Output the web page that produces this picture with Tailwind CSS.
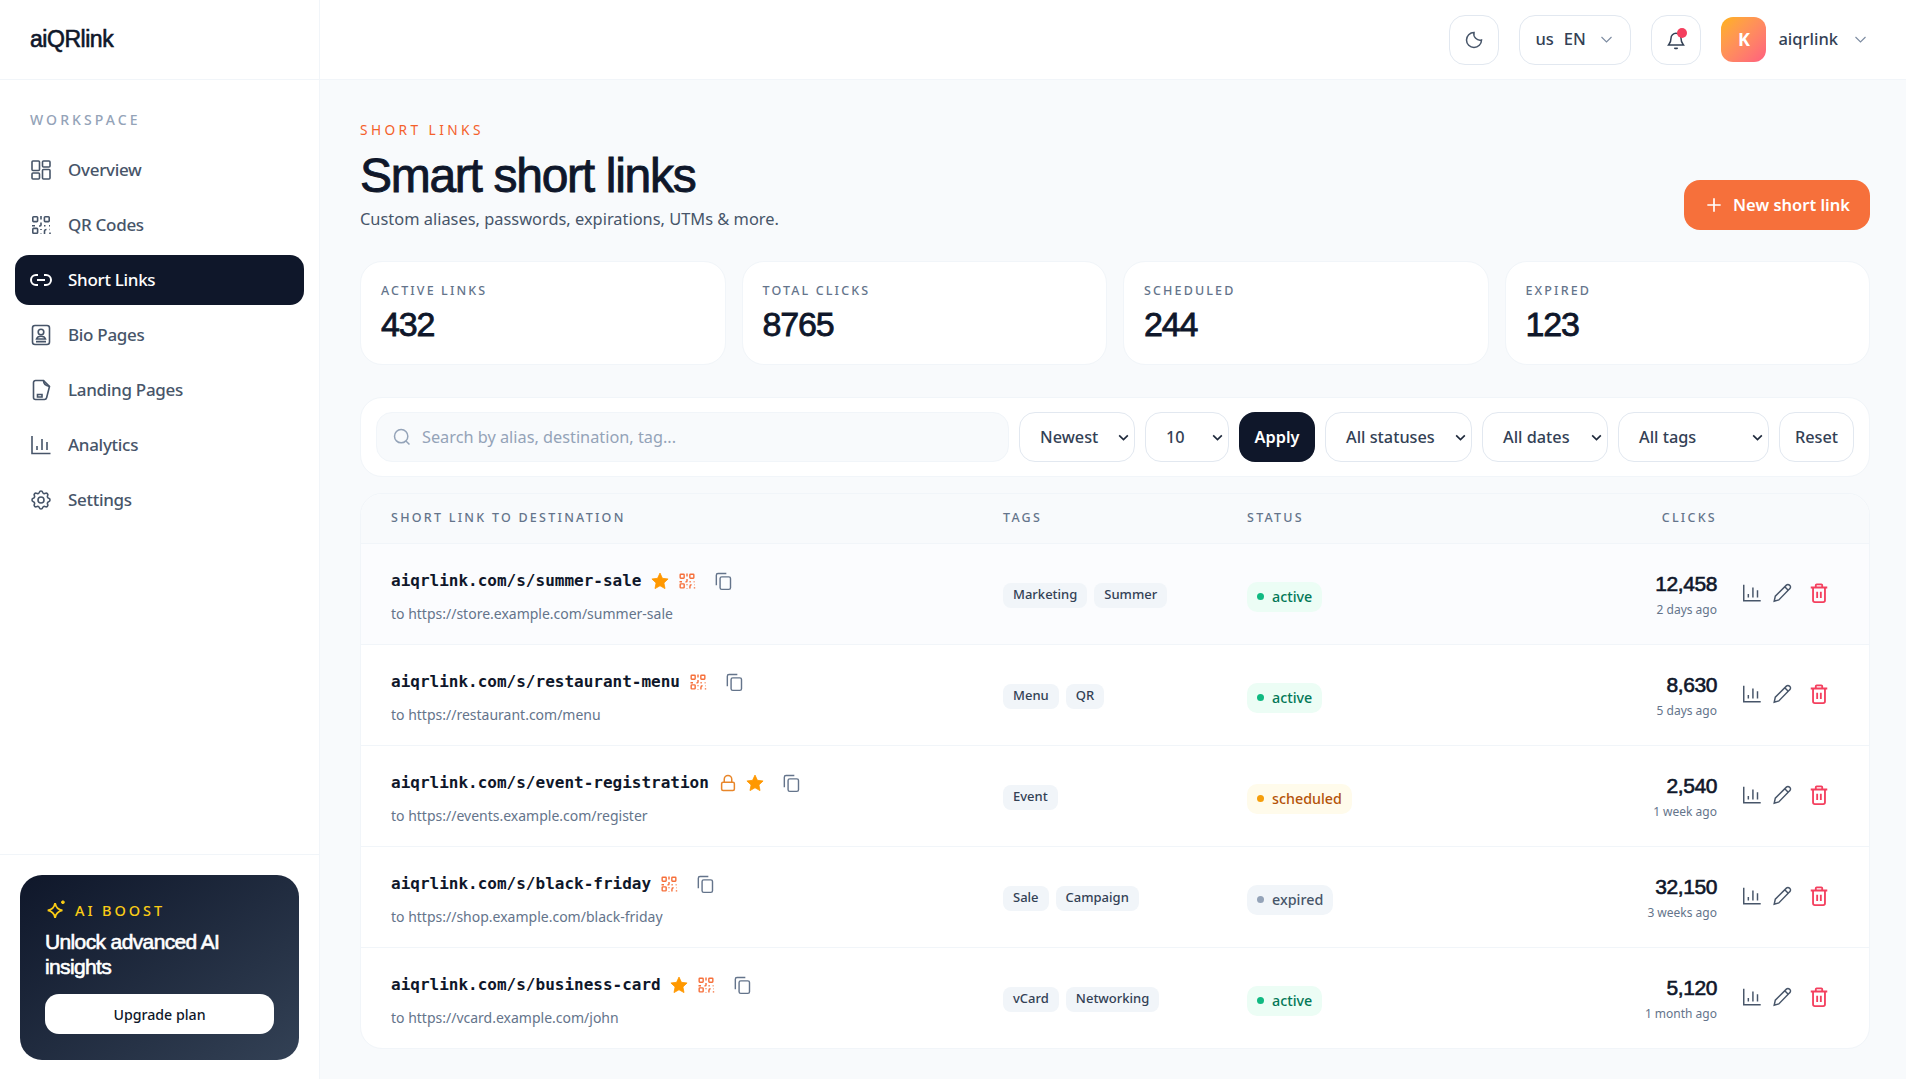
<!DOCTYPE html>
<html lang="en">
<head>
  <meta charset="UTF-8" />
  <title>aiQRlink - Short Links</title>
  <script src="https://cdn.jsdelivr.net/npm/@tailwindcss/browser@4"></script>
</head>
<body class="font-['Noto_Sans',sans-serif] bg-[#f8fafc] text-[#0f172a] h-[1079px] overflow-hidden">

  <!-- icon sprites -->
  <svg class="hidden">
    <symbol id="i-dash" viewBox="0 0 24 24"><rect x="3" y="3" width="7.500" height="9.500" rx="1"/><rect x="13.500" y="3" width="7.500" height="6" rx="1"/><rect x="13.500" y="11.500" width="7.500" height="9.500" rx="1"/><rect x="3" y="15" width="7.500" height="6" rx="1"/></symbol>
    <symbol id="i-qr" viewBox="0 0 24 24"><rect x="3.800" y="3.800" width="4.800" height="4.800" rx=".8"/><rect x="15.400" y="3.800" width="4.800" height="4.800" rx=".8"/><rect x="3.800" y="15.400" width="4.800" height="4.800" rx=".8"/><path d="M12 3v3.500M12 9.500v2.500c0 .5-.5 1-1 1h-1M3 12.800h3M15 12.800h1.500M20 12.800h1M12 16v1M12 20.500v.5M15.500 21v-2.500a2 2 0 0 1 2-2M21 21v-1.500M20.500 16.500h.5"/></symbol>
    <symbol id="i-link" viewBox="0 0 24 24"><path d="M9 17H7A5 5 0 0 1 7 7h2M15 7h2a5 5 0 1 1 0 10h-2M8 12h8"/></symbol>
    <symbol id="i-bio" viewBox="0 0 24 24"><rect x="3.500" y="2.500" width="17" height="19" rx="2.500"/><circle cx="12" cy="9" r="2.800"/><path d="M7.500 16c.6-2 2.400-2.800 4.500-2.800s3.900.8 4.500 2.800zM7 18.600h10"/></symbol>
    <symbol id="i-page" viewBox="0 0 24 24"><path d="M14.500 2.500H6.500a2 2 0 0 0-2 2v15a2 2 0 0 0 2 2h9a2.200 2.200 0 0 0 2.100-1.700L20.500 8.500z"/><path d="M14.500 2.500c0 3 1.200 5 6 6"/><path d="M11 11.500v.01M8.500 16.500h4.500v2.500H8.500z"/></symbol>
    <symbol id="i-chart" viewBox="0 0 24 24"><path d="M3 3v17.500h18.500M8 17v-4M13 17V6M18 17V9"/></symbol>
    <symbol id="i-gear" viewBox="0 0 24 24"><path d="M10.325 4.317c.426 -1.756 2.924 -1.756 3.35 0a1.724 1.724 0 0 0 2.573 1.066c1.543 -.94 3.31 .826 2.37 2.37a1.724 1.724 0 0 0 1.065 2.572c1.756 .426 1.756 2.924 0 3.35a1.724 1.724 0 0 0 -1.066 2.573c.94 1.543 -.826 3.31 -2.37 2.37a1.724 1.724 0 0 0 -2.572 1.065c-.426 1.756 -2.924 1.756 -3.35 0a1.724 1.724 0 0 0 -2.573 -1.066c-1.543 .94 -3.31 -.826 -2.37 -2.37a1.724 1.724 0 0 0 -1.065 -2.572c-1.756 -.426 -1.756 -2.924 0 -3.35a1.724 1.724 0 0 0 1.066 -2.573c-.94 -1.543 .826 -3.31 2.37 -2.37c1 .608 2.296 .07 2.572 -1.065z"/><circle cx="12" cy="12" r="3"/></symbol>
    <symbol id="i-spark" viewBox="0 0 24 24"><path d="M11 4.500c.9 5 3 7.100 8 8-5 .9-7.100 3-8 8-.9-5-3-7.100-8-8 5-.9 7.100-3 8-8z"/><path d="M19.500 1.500v4M17.500 3.500h4M3.500 20.500v.01"/></symbol>
    <symbol id="i-moon" viewBox="0 0 24 24"><path d="M12 3a7.500 7.500 0 0 0 9 9 9 9 0 1 1-9-9z"/></symbol>
    <symbol id="i-chev" viewBox="0 0 24 24"><path d="M4 8l8 8 8-8"/></symbol>
    <symbol id="i-bell" viewBox="0 0 24 24"><path d="M12 4a6 6 0 0 0-6 6c0 5-2 6.500-3 8h18c-1-1.500-3-3-3-8a6 6 0 0 0-6-6zM10 21.500c1 .8 3 .8 4 0"/></symbol>
    <symbol id="i-plus" viewBox="0 0 24 24"><path d="M12 4v16M4 12h16"/></symbol>
    <symbol id="i-search" viewBox="0 0 24 24"><circle cx="11" cy="11" r="8"/><path d="M21 21l-4.300-4.300"/></symbol>
    <symbol id="i-copy" viewBox="0 0 24 24"><rect x="8.500" y="7" width="12.500" height="15" rx="2"/><path d="M16 3H6a2 2 0 0 0-2 2v12"/></symbol>
    <symbol id="i-lock" viewBox="0 0 24 24"><rect x="3.500" y="11" width="17" height="11" rx="2"/><path d="M7 11V7a5 5 0 0 1 10 0v4"/></symbol>
    <symbol id="i-star" viewBox="0 0 24 24"><path stroke-width="1" d="M12 2.500l2.900 6.300 6.800.8-5 4.700 1.300 6.800-6-3.400-6 3.400 1.300-6.800-5-4.700 6.800-.8z"/></symbol>
    <symbol id="i-pencil" viewBox="0 0 24 24"><path d="M3.500 21l1.200-5.500L16.800 3.400a2.300 2.300 0 0 1 3.300 0l.5.5a2.300 2.300 0 0 1 0 3.300L8.500 19.600z M15 5.200l3.800 3.800"/></symbol>
    <symbol id="i-trash" viewBox="0 0 24 24"><path d="M3 6h18M8.500 6V3.500a1 1 0 0 1 1-1h5a1 1 0 0 1 1 1V6M5.500 6v14a2 2 0 0 0 2 2h9a2 2 0 0 0 2-2V6M10 10.500v7M14 10.500v7"/></symbol>
  </svg>

  <div class="flex h-full">

    <!-- Sidebar -->
    <aside class="w-[320px] shrink-0 bg-white border-r border-[#f1f5f9] flex flex-col h-full">
      <div class="h-[80px] px-[30px] flex items-center border-b border-[#f1f5f9] font-['Liberation_Sans',sans-serif] text-[23px] tracking-[-0.02em] [-webkit-text-stroke:0.6px] text-[#0f172a]">aiQRlink</div>
      <nav class="flex-1 px-[15px] pt-[31px]">
        <p class="pl-[15px] text-[14px] leading-[18px] tracking-[0.22em] font-medium text-[#94a3b8] mb-[16px]">WORKSPACE</p>
        <div class="flex flex-col gap-[5px] text-[17px] tracking-[-0.3px] font-medium text-[#475569]">
          <a class="h-[50px] flex items-center gap-[15px] pl-[14px] rounded-[14px]"><svg class="w-[24px] h-[24px] fill-none stroke-current stroke-[1.6]"><use href="#i-dash"/></svg>Overview</a>
          <a class="h-[50px] flex items-center gap-[15px] pl-[14px] rounded-[14px]"><svg class="w-[24px] h-[24px] fill-none stroke-current stroke-[1.6]"><use href="#i-qr"/></svg>QR Codes</a>
          <a class="h-[50px] flex items-center gap-[15px] pl-[14px] rounded-[14px] bg-[#0f172a] text-white"><svg class="w-[24px] h-[24px] fill-none stroke-current stroke-2"><use href="#i-link"/></svg>Short Links</a>
          <a class="h-[50px] flex items-center gap-[15px] pl-[14px] rounded-[14px]"><svg class="w-[24px] h-[24px] fill-none stroke-current stroke-[1.6]"><use href="#i-bio"/></svg>Bio Pages</a>
          <a class="h-[50px] flex items-center gap-[15px] pl-[14px] rounded-[14px]"><svg class="w-[24px] h-[24px] fill-none stroke-current stroke-[1.6]"><use href="#i-page"/></svg>Landing Pages</a>
          <a class="h-[50px] flex items-center gap-[15px] pl-[14px] rounded-[14px]"><svg class="w-[24px] h-[24px] fill-none stroke-current stroke-[1.6]"><use href="#i-chart"/></svg>Analytics</a>
          <a class="h-[50px] flex items-center gap-[15px] pl-[14px] rounded-[14px]"><svg class="w-[24px] h-[24px] fill-none stroke-current stroke-[1.6]"><use href="#i-gear"/></svg>Settings</a>
        </div>
      </nav>
      <div class="border-t border-[#f1f5f9] px-[20px] pt-[20px] pb-[19px]">
        <div class="h-[185px] rounded-[22px] bg-linear-to-br from-[#0f172a] to-[#334155] px-[25px] pt-[23px]">
          <div class="flex items-center gap-[8px] text-[#facc15] text-[14.500px] font-medium tracking-[0.2em] leading-[24px]">
            <svg class="w-[22px] h-[22px] fill-none stroke-current stroke-2"><use href="#i-spark"/></svg>AI BOOST
          </div>
          <p class="font-['Liberation_Sans',sans-serif] text-white text-[21px] tracking-[-0.03em] [-webkit-text-stroke:0.6px] leading-[25px] mt-[7px]">Unlock advanced AI insights</p>
          <button class="mt-[15px] w-full h-[40px] pt-[2px] bg-white rounded-[14px] text-[14.200px] font-medium text-[#0f172a]">Upgrade plan</button>
        </div>
      </div>
    </aside>

    <div class="flex-1 min-w-0 flex flex-col">
      <!-- Topbar -->
      <header class="h-[80px] shrink-0 bg-white border-b border-[#f1f5f9] flex items-center justify-end pr-[38px] text-[#334155]">
        <button class="w-[50px] h-[50px] rounded-[16px] border border-[#e2e8f0] bg-white flex items-center justify-center"><svg class="w-[20px] h-[20px] fill-none stroke-[#475569] stroke-[1.8]"><use href="#i-moon"/></svg></button>
        <button class="ml-[20px] w-[112px] h-[50px] rounded-[16px] border border-[#e2e8f0] flex items-center pl-[15px] text-[16.500px] font-medium">us<span class="ml-[10px]">EN</span><svg class="ml-[13px] w-[15px] h-[15px] fill-none stroke-[#7c8ba1] stroke-[1.800]"><use href="#i-chev"/></svg></button>
        <button class="relative ml-[20px] w-[50px] h-[50px] rounded-[16px] border border-[#e2e8f0] flex items-center justify-center"><svg class="w-[20px] h-[20px] fill-none stroke-[#334155] stroke-[1.8]"><use href="#i-bell"/></svg><span class="absolute top-[12px] right-[13px] w-[10px] h-[10px] rounded-full bg-[#f43f5e]"></span></button>
        <div class="ml-[20px] w-[45px] h-[45px] rounded-[12px] bg-linear-to-br from-[#ffb300] to-[#ff5e7e] flex items-center justify-center text-white font-bold text-[18px]">K</div>
        <span class="ml-[12px] text-[16.500px] font-medium">aiqrlink</span>
        <svg class="ml-[15px] w-[15px] h-[15px] fill-none stroke-[#7c8ba1] stroke-[1.800]"><use href="#i-chev"/></svg>
      </header>

      <main class="pl-[40px] pr-[36px] pt-[40px]">
        <!-- Page head -->
        <div class="flex items-end justify-between">
          <div>
            <p class="text-[13.700px] leading-[20px] tracking-[0.25em] text-[#f4602a]">SHORT LINKS</p>
            <h1 class="font-['Liberation_Sans',sans-serif] text-[48px] leading-[50px] tracking-[-0.027em] [-webkit-text-stroke:0.9px] text-[#0f172a] mt-[11px]">Smart short links</h1>
            <p class="text-[16.400px] leading-[24px] text-[#475569] mt-[6px]">Custom aliases, passwords, expirations, UTMs &amp; more.</p>
          </div>
          <button class="w-[186px] h-[50px] rounded-[16px] bg-[#f6703b] text-white text-[16.500px] font-semibold flex items-center justify-center gap-[9px] mb-[1px]"><svg class="w-[20px] h-[20px] fill-none stroke-current stroke-2"><use href="#i-plus"/></svg>New short link</button>
        </div>

        <!-- Stats -->
        <div class="grid grid-cols-4 gap-[16px] mt-[30px]">
          <div class="h-[104px] rounded-[22px] bg-white border border-[#f1f5f9] px-[20px] pt-[20px]"><p class="text-[12.500px] leading-[18px] tracking-[0.17em] font-medium text-[#64748b]">ACTIVE LINKS</p><p class="font-['Liberation_Sans',sans-serif] text-[34px] leading-[40px] tracking-[-0.035em] [-webkit-text-stroke:0.8px] mt-[4px]">432</p></div>
          <div class="h-[104px] rounded-[22px] bg-white border border-[#f1f5f9] px-[20px] pt-[20px]"><p class="text-[12.500px] leading-[18px] tracking-[0.17em] font-medium text-[#64748b]">TOTAL CLICKS</p><p class="font-['Liberation_Sans',sans-serif] text-[34px] leading-[40px] tracking-[-0.035em] [-webkit-text-stroke:0.8px] mt-[4px]">8765</p></div>
          <div class="h-[104px] rounded-[22px] bg-white border border-[#f1f5f9] px-[20px] pt-[20px]"><p class="text-[12.500px] leading-[18px] tracking-[0.17em] font-medium text-[#64748b]">SCHEDULED</p><p class="font-['Liberation_Sans',sans-serif] text-[34px] leading-[40px] tracking-[-0.035em] [-webkit-text-stroke:0.8px] mt-[4px]">244</p></div>
          <div class="h-[104px] rounded-[22px] bg-white border border-[#f1f5f9] px-[20px] pt-[20px]"><p class="text-[12.500px] leading-[18px] tracking-[0.17em] font-medium text-[#64748b]">EXPIRED</p><p class="font-['Liberation_Sans',sans-serif] text-[34px] leading-[40px] tracking-[-0.035em] [-webkit-text-stroke:0.8px] mt-[4px]">123</p></div>
        </div>

        <!-- Filters -->
        <div class="mt-[32px] h-[80px] rounded-[22px] bg-white border border-[#f1f5f9] px-[15px] flex items-center gap-[10px] text-[16.300px] font-medium text-[#334155]">
          <div class="w-[633px] h-[50px] rounded-[16px] bg-[#f8fafc] border border-[#f1f5f9] flex items-center pl-[15px] gap-[10px] text-[#94a3b8] font-normal"><svg class="w-[20px] h-[20px] fill-none stroke-current stroke-[1.800]"><use href="#i-search"/></svg>Search by alias, destination, tag...</div>
          <div class="w-[116px] h-[50px] rounded-[16px] border border-[#e2e8f0] flex items-center pl-[20px] relative">Newest<svg class="absolute right-[4px] w-[13px] h-[13px] fill-none stroke-[#1e293b] stroke-[3]"><use href="#i-chev"/></svg></div>
          <div class="w-[84px] h-[50px] rounded-[16px] border border-[#e2e8f0] flex items-center pl-[20px] relative">10<svg class="absolute right-[4px] w-[13px] h-[13px] fill-none stroke-[#1e293b] stroke-[3]"><use href="#i-chev"/></svg></div>
          <button class="w-[76px] h-[50px] rounded-[16px] bg-[#0f172a] text-white font-semibold">Apply</button>
          <div class="w-[147px] h-[50px] rounded-[16px] border border-[#e2e8f0] flex items-center pl-[20px] relative">All statuses<svg class="absolute right-[4px] w-[13px] h-[13px] fill-none stroke-[#1e293b] stroke-[3]"><use href="#i-chev"/></svg></div>
          <div class="w-[126px] h-[50px] rounded-[16px] border border-[#e2e8f0] flex items-center pl-[20px] relative">All dates<svg class="absolute right-[4px] w-[13px] h-[13px] fill-none stroke-[#1e293b] stroke-[3]"><use href="#i-chev"/></svg></div>
          <div class="w-[151px] h-[50px] rounded-[16px] border border-[#e2e8f0] flex items-center pl-[20px] relative">All tags<svg class="absolute right-[4px] w-[13px] h-[13px] fill-none stroke-[#1e293b] stroke-[3]"><use href="#i-chev"/></svg></div>
          <button class="w-[75px] h-[50px] rounded-[16px] border border-[#e2e8f0]">Reset</button>
        </div>

        <!-- Table -->
        <div class="mt-[16px] rounded-[22px] bg-white border border-[#f1f5f9] overflow-hidden">
          <div class="h-[50px] bg-[#f8fafc] border-b border-[#f1f5f9] grid grid-cols-[612px_244px_1fr_152px] pl-[30px] items-center text-[12.500px] font-medium tracking-[0.18em] text-[#64748b]">
            <span>SHORT LINK TO DESTINATION</span><span>TAGS</span><span>STATUS</span><span class="-ml-[152px] mr-[152px] text-right">CLICKS</span>
          </div>

          <!-- row 1 -->
          <div class="h-[101px] bg-[#fbfcfe] border-b border-[#f1f5f9] grid grid-cols-[612px_244px_1fr_152px] pl-[30px] items-center">
            <div class="mt-[4px]">
              <div class="flex items-center h-[24px] font-['DejaVu_Sans_Mono',monospace] font-bold text-[16px] text-[#0f172a]">aiqrlink.com/s/summer-sale
                <svg class="ml-[9px] w-[20px] h-[20px] fill-[#ff9800] stroke-[#ff9800]"><use href="#i-star"/></svg>
                <svg class="ml-[7px] w-[20px] h-[20px] fill-none stroke-[#f6703b] stroke-[1.700]"><use href="#i-qr"/></svg>
                <svg class="ml-[16px] w-[20px] h-[20px] fill-none stroke-[#64748b] stroke-[1.7]"><use href="#i-copy"/></svg>
              </div>
              <p class="mt-[11px] text-[14px] leading-[20px] text-[#64748b]">to https://store.example.com/summer-sale</p>
            </div>
            <div class="mt-[2px] flex gap-[7px] text-[13px] font-medium text-[#334155]"><span class="h-[25px] px-[10px] rounded-[8px] bg-[#f1f5f9] flex items-center">Marketing</span><span class="h-[25px] px-[10px] rounded-[8px] bg-[#f1f5f9] flex items-center">Summer</span></div>
            <div><span class="inline-flex items-center gap-[8px] h-[30px] mt-[5px] px-[10px] rounded-[10px] bg-[#ecfdf5] text-[14.300px] font-medium text-[#047857]"><i class="w-[7px] h-[7px] rounded-full bg-[#10b981]"></i>active</span></div>
            <div class="-ml-[152px] flex items-center justify-end">
              <div class="mt-[2px] text-right"><p class="font-['Liberation_Sans',sans-serif] text-[21px] leading-[24px] tracking-[-0.02em] [-webkit-text-stroke:0.6px]">12,458</p><p class="text-[12px] leading-[18px] text-[#64748b] mt-[5px]">2 days ago</p></div>
              <div class="-mt-[2px] flex items-center w-[152px] pl-[24px]"><svg class="w-[22px] h-[22px] fill-none stroke-[#475569] stroke-[1.6]"><use href="#i-chart"/></svg><svg class="ml-[8px] w-[22px] h-[22px] fill-none stroke-[#475569] stroke-[1.6]"><use href="#i-pencil"/></svg><svg class="ml-[15px] w-[22px] h-[22px] fill-none stroke-[#f43f5e] stroke-2"><use href="#i-trash"/></svg></div>
            </div>
          </div>

          <!-- row 2 -->
          <div class="h-[101px] border-b border-[#f1f5f9] grid grid-cols-[612px_244px_1fr_152px] pl-[30px] items-center">
            <div class="mt-[4px]">
              <div class="flex items-center h-[24px] font-['DejaVu_Sans_Mono',monospace] font-bold text-[16px] text-[#0f172a]">aiqrlink.com/s/restaurant-menu
                <svg class="ml-[8px] w-[20px] h-[20px] fill-none stroke-[#f6703b] stroke-[1.700]"><use href="#i-qr"/></svg>
                <svg class="ml-[16px] w-[20px] h-[20px] fill-none stroke-[#64748b] stroke-[1.7]"><use href="#i-copy"/></svg>
              </div>
              <p class="mt-[11px] text-[14px] leading-[20px] text-[#64748b]">to https://restaurant.com/menu</p>
            </div>
            <div class="mt-[2px] flex gap-[7px] text-[13px] font-medium text-[#334155]"><span class="h-[25px] px-[10px] rounded-[8px] bg-[#f1f5f9] flex items-center">Menu</span><span class="h-[25px] px-[10px] rounded-[8px] bg-[#f1f5f9] flex items-center">QR</span></div>
            <div><span class="inline-flex items-center gap-[8px] h-[30px] mt-[5px] px-[10px] rounded-[10px] bg-[#ecfdf5] text-[14.300px] font-medium text-[#047857]"><i class="w-[7px] h-[7px] rounded-full bg-[#10b981]"></i>active</span></div>
            <div class="-ml-[152px] flex items-center justify-end">
              <div class="mt-[2px] text-right"><p class="font-['Liberation_Sans',sans-serif] text-[21px] leading-[24px] tracking-[-0.02em] [-webkit-text-stroke:0.6px]">8,630</p><p class="text-[12px] leading-[18px] text-[#64748b] mt-[5px]">5 days ago</p></div>
              <div class="-mt-[2px] flex items-center w-[152px] pl-[24px]"><svg class="w-[22px] h-[22px] fill-none stroke-[#475569] stroke-[1.6]"><use href="#i-chart"/></svg><svg class="ml-[8px] w-[22px] h-[22px] fill-none stroke-[#475569] stroke-[1.6]"><use href="#i-pencil"/></svg><svg class="ml-[15px] w-[22px] h-[22px] fill-none stroke-[#f43f5e] stroke-2"><use href="#i-trash"/></svg></div>
            </div>
          </div>

          <!-- row 3 -->
          <div class="h-[101px] border-b border-[#f1f5f9] grid grid-cols-[612px_244px_1fr_152px] pl-[30px] items-center">
            <div class="mt-[4px]">
              <div class="flex items-center h-[24px] font-['DejaVu_Sans_Mono',monospace] font-bold text-[16px] text-[#0f172a]">aiqrlink.com/s/event-registration
                <svg class="ml-[10px] w-[18px] h-[18px] fill-none stroke-[#e8862a] stroke-2"><use href="#i-lock"/></svg>
                <svg class="ml-[8px] w-[20px] h-[20px] fill-[#ff9800] stroke-[#ff9800]"><use href="#i-star"/></svg>
                <svg class="ml-[16px] w-[20px] h-[20px] fill-none stroke-[#64748b] stroke-[1.7]"><use href="#i-copy"/></svg>
              </div>
              <p class="mt-[11px] text-[14px] leading-[20px] text-[#64748b]">to https://events.example.com/register</p>
            </div>
            <div class="mt-[2px] flex gap-[7px] text-[13px] font-medium text-[#334155]"><span class="h-[25px] px-[10px] rounded-[8px] bg-[#f1f5f9] flex items-center">Event</span></div>
            <div><span class="inline-flex items-center gap-[8px] h-[30px] mt-[5px] px-[10px] rounded-[10px] bg-[#fffbeb] text-[14.300px] font-medium text-[#b45309]"><i class="w-[7px] h-[7px] rounded-full bg-[#f59e0b]"></i>scheduled</span></div>
            <div class="-ml-[152px] flex items-center justify-end">
              <div class="mt-[2px] text-right"><p class="font-['Liberation_Sans',sans-serif] text-[21px] leading-[24px] tracking-[-0.02em] [-webkit-text-stroke:0.6px]">2,540</p><p class="text-[12px] leading-[18px] text-[#64748b] mt-[5px]">1 week ago</p></div>
              <div class="-mt-[2px] flex items-center w-[152px] pl-[24px]"><svg class="w-[22px] h-[22px] fill-none stroke-[#475569] stroke-[1.6]"><use href="#i-chart"/></svg><svg class="ml-[8px] w-[22px] h-[22px] fill-none stroke-[#475569] stroke-[1.6]"><use href="#i-pencil"/></svg><svg class="ml-[15px] w-[22px] h-[22px] fill-none stroke-[#f43f5e] stroke-2"><use href="#i-trash"/></svg></div>
            </div>
          </div>

          <!-- row 4 -->
          <div class="h-[101px] border-b border-[#f1f5f9] grid grid-cols-[612px_244px_1fr_152px] pl-[30px] items-center">
            <div class="mt-[4px]">
              <div class="flex items-center h-[24px] font-['DejaVu_Sans_Mono',monospace] font-bold text-[16px] text-[#0f172a]">aiqrlink.com/s/black-friday
                <svg class="ml-[8px] w-[20px] h-[20px] fill-none stroke-[#f6703b] stroke-[1.700]"><use href="#i-qr"/></svg>
                <svg class="ml-[16px] w-[20px] h-[20px] fill-none stroke-[#64748b] stroke-[1.7]"><use href="#i-copy"/></svg>
              </div>
              <p class="mt-[11px] text-[14px] leading-[20px] text-[#64748b]">to https://shop.example.com/black-friday</p>
            </div>
            <div class="mt-[2px] flex gap-[7px] text-[13px] font-medium text-[#334155]"><span class="h-[25px] px-[10px] rounded-[8px] bg-[#f1f5f9] flex items-center">Sale</span><span class="h-[25px] px-[10px] rounded-[8px] bg-[#f1f5f9] flex items-center">Campaign</span></div>
            <div><span class="inline-flex items-center gap-[8px] h-[30px] mt-[5px] px-[10px] rounded-[10px] bg-[#f1f5f9] text-[14.300px] font-medium text-[#475569]"><i class="w-[7px] h-[7px] rounded-full bg-[#94a3b8]"></i>expired</span></div>
            <div class="-ml-[152px] flex items-center justify-end">
              <div class="mt-[2px] text-right"><p class="font-['Liberation_Sans',sans-serif] text-[21px] leading-[24px] tracking-[-0.02em] [-webkit-text-stroke:0.6px]">32,150</p><p class="text-[12px] leading-[18px] text-[#64748b] mt-[5px]">3 weeks ago</p></div>
              <div class="-mt-[2px] flex items-center w-[152px] pl-[24px]"><svg class="w-[22px] h-[22px] fill-none stroke-[#475569] stroke-[1.6]"><use href="#i-chart"/></svg><svg class="ml-[8px] w-[22px] h-[22px] fill-none stroke-[#475569] stroke-[1.6]"><use href="#i-pencil"/></svg><svg class="ml-[15px] w-[22px] h-[22px] fill-none stroke-[#f43f5e] stroke-2"><use href="#i-trash"/></svg></div>
            </div>
          </div>

          <!-- row 5 -->
          <div class="h-[100px] grid grid-cols-[612px_244px_1fr_152px] pl-[30px] items-center">
            <div class="mt-[4px]">
              <div class="flex items-center h-[24px] font-['DejaVu_Sans_Mono',monospace] font-bold text-[16px] text-[#0f172a]">aiqrlink.com/s/business-card
                <svg class="ml-[8px] w-[20px] h-[20px] fill-[#ff9800] stroke-[#ff9800]"><use href="#i-star"/></svg>
                <svg class="ml-[7px] w-[20px] h-[20px] fill-none stroke-[#f6703b] stroke-[1.700]"><use href="#i-qr"/></svg>
                <svg class="ml-[16px] w-[20px] h-[20px] fill-none stroke-[#64748b] stroke-[1.7]"><use href="#i-copy"/></svg>
              </div>
              <p class="mt-[11px] text-[14px] leading-[20px] text-[#64748b]">to https://vcard.example.com/john</p>
            </div>
            <div class="mt-[2px] flex gap-[7px] text-[13px] font-medium text-[#334155]"><span class="h-[25px] px-[10px] rounded-[8px] bg-[#f1f5f9] flex items-center">vCard</span><span class="h-[25px] px-[10px] rounded-[8px] bg-[#f1f5f9] flex items-center">Networking</span></div>
            <div><span class="inline-flex items-center gap-[8px] h-[30px] mt-[5px] px-[10px] rounded-[10px] bg-[#ecfdf5] text-[14.300px] font-medium text-[#047857]"><i class="w-[7px] h-[7px] rounded-full bg-[#10b981]"></i>active</span></div>
            <div class="-ml-[152px] flex items-center justify-end">
              <div class="mt-[2px] text-right"><p class="font-['Liberation_Sans',sans-serif] text-[21px] leading-[24px] tracking-[-0.02em] [-webkit-text-stroke:0.6px]">5,120</p><p class="text-[12px] leading-[18px] text-[#64748b] mt-[5px]">1 month ago</p></div>
              <div class="-mt-[2px] flex items-center w-[152px] pl-[24px]"><svg class="w-[22px] h-[22px] fill-none stroke-[#475569] stroke-[1.6]"><use href="#i-chart"/></svg><svg class="ml-[8px] w-[22px] h-[22px] fill-none stroke-[#475569] stroke-[1.6]"><use href="#i-pencil"/></svg><svg class="ml-[15px] w-[22px] h-[22px] fill-none stroke-[#f43f5e] stroke-2"><use href="#i-trash"/></svg></div>
            </div>
          </div>
        </div>
      </main>
    </div>
  </div>
</body>
</html>
